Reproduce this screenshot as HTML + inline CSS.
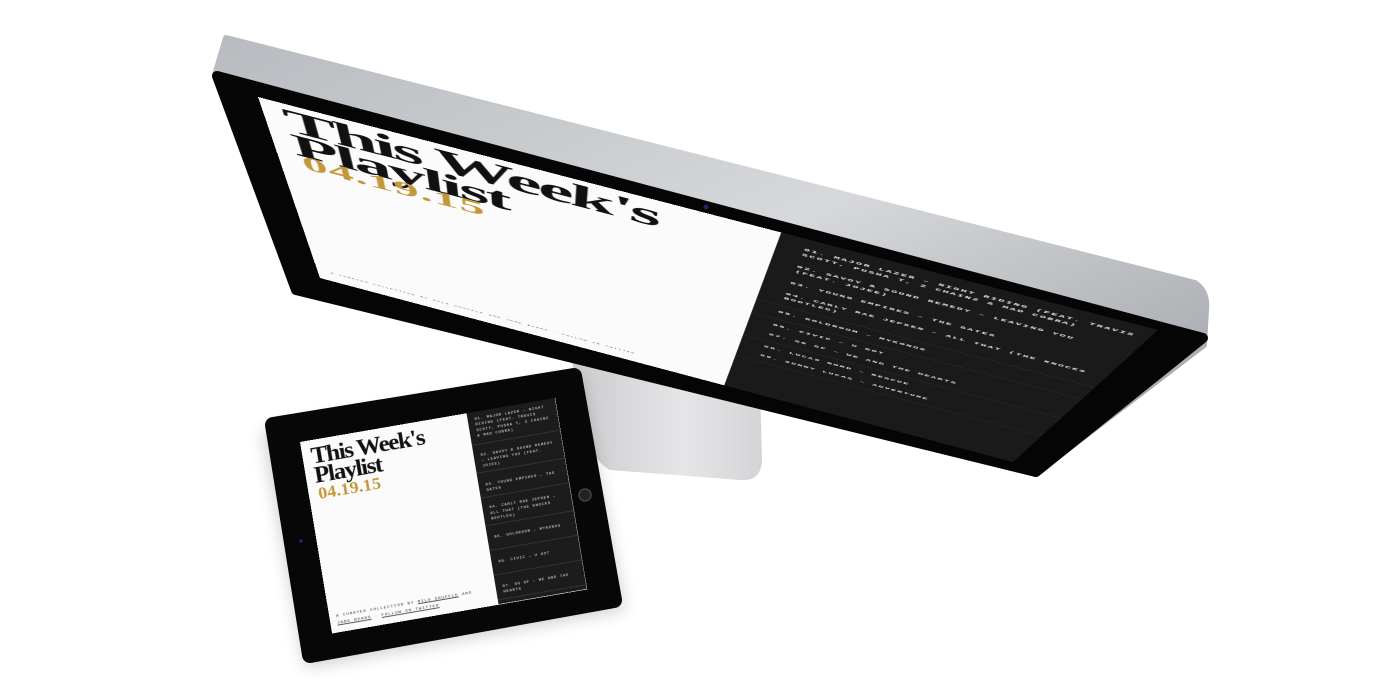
<!DOCTYPE html>
<html><head><meta charset="utf-8">
<style>
html,body{margin:0;padding:0;background:#fff;}
#root{position:relative;width:1400px;height:700px;overflow:hidden;background:#fff;}
svg.bg{position:absolute;left:0;top:0;}
.scr{position:absolute;left:0;top:0;transform-origin:0 0;overflow:hidden;}
#mon{width:1000px;height:600px;transform:matrix3d(0.8595,0.2215,0,-0.00003496,0.2587,0.4367,0,0.0004857,0,0,1,0,258,97,0,1);}
#tab{width:300px;height:240px;transform:matrix(0.85,-0.1467,0.1333,0.796,300,442);}
.white{position:absolute;left:0;top:0;bottom:0;background:#fbfbfb;}
.black{position:absolute;top:0;bottom:0;right:0;background:#1a1a1a;}
.serif{font-family:"Liberation Serif",serif;font-weight:bold;white-space:nowrap;position:absolute;}
.mono{font-family:"Liberation Mono",monospace;text-transform:uppercase;}
.item{border-bottom:1px solid #3a3a3a;color:#eee;}
</style></head><body><div id="root">
<svg class="bg" width="1400" height="700">
<defs>
<linearGradient id="sil" x1="0" y1="0" x2="1" y2="1"><stop offset="0" stop-color="#b8bbbf"/><stop offset="0.5" stop-color="#d6d8db"/><stop offset="1" stop-color="#9a9da2"/></linearGradient>
<linearGradient id="std" x1="0" y1="0" x2="1" y2="0"><stop offset="0" stop-color="#c9c9cc"/><stop offset="0.6" stop-color="#e6e6e8"/><stop offset="1" stop-color="#d4d4d6"/></linearGradient>
<filter id="blur"><feGaussianBlur stdDeviation="8"/></filter>
</defs>
<path d="M565 330 L760 385 L762 462 Q760 482 740 480 L610 470 Q590 460 585 420 Z" fill="url(#std)"/>
<path d="M262 430 L580 378 L625 610 L305 668 Z" fill="#000" opacity="0.18" filter="url(#blur)"/>
<path d="M226 38 L1195 283 Q1208 292 1206 310 L1204 345 L1035 474 L215 75 Z" fill="url(#sil)" stroke="url(#sil)" stroke-width="6" stroke-linejoin="round"/>
<path d="M217 76 L1203 338 L1036 472 L296 290 Z" fill="#050505" stroke="#050505" stroke-width="10" stroke-linejoin="round"/>
<circle cx="706" cy="207" r="2.5" fill="#1a2a66"/>
<path d="M273 425 L574 376 L614 600 L310 655 Z" fill="#070707" stroke="#070707" stroke-width="16" stroke-linejoin="round"/>
<circle cx="585" cy="495" r="6" fill="#222" stroke="#444" stroke-width="1.5"/>
<circle cx="301" cy="541" r="1.8" fill="#1a2a77"/>
</svg>

<div id="mon" class="scr">
 <div class="white" style="width:590px;">
  <div class="serif" style="left:24px;top:-8px;font-size:92px;letter-spacing:-4px;color:#111;">This Week's</div>
  <div class="serif" style="left:24px;top:60px;font-size:92px;letter-spacing:-4px;color:#111;">Playlist</div>
  <div class="serif" style="left:30px;top:128px;font-size:62px;letter-spacing:1px;color:#c4973a;">04.19.15</div>
  <div class="mono" style="position:absolute;left:20px;top:560px;font-size:7px;letter-spacing:2px;color:#444;white-space:nowrap;">A curated collection by Milo Shuffle and Jane Beans · Follow on Twitter</div>
 </div>
 <div class="black" style="left:590px;">
  <div class="mono" style="font-size:10.5px;letter-spacing:2px;font-weight:bold;line-height:16px;padding-top:20px;">
   <div class="item" style="padding:4px 10px 18px 30px;border-color:#1a1a1a;">01. Major Lazer – Night Riding (feat. Travis Scott, Pusha T, 2 Chainz &amp; Mad Cobra)</div>
   <div class="item" style="padding:4px 10px 18px 30px;border-color:#1a1a1a;">02. Savoy &amp; Sound Remedy – Leaving You (feat. Jojee)</div>
   <div class="item" style="padding:4px 10px 18px 30px;border-color:#1a1a1a;">03. Young Empires – The Gates</div>
   <div class="item" style="padding:4px 10px 18px 30px;">04. Carly Rae Jepsen – All That (The Knocks Bootleg)</div>
   <div class="item" style="padding:16px 10px 18px 30px;">05. Goldroom – Mykonos</div>
   <div class="item" style="padding:16px 10px 18px 30px;border-color:#1a1a1a;">06. Civic – U Got</div>
   <div class="item" style="padding:4px 10px 18px 30px;">07. SG GF – We and the Hearts</div>
   <div class="item" style="padding:16px 10px 18px 30px;border-color:#1a1a1a;">08. Lucas Nord – Rescue</div>
   <div class="item" style="padding:4px 10px 18px 30px;">09. Sunny Lucas – Adventure</div>
  </div>
 </div>
</div>

<div id="tab" class="scr">
 <div class="white" style="width:196px;">
  <div class="serif" style="left:10px;top:4px;font-size:29px;letter-spacing:-1.6px;color:#111;">This Week's</div>
  <div class="serif" style="left:10px;top:28px;font-size:29px;letter-spacing:-1.6px;color:#111;">Playlist</div>
  <div class="serif" style="left:11px;top:55px;font-size:21px;letter-spacing:0;color:#c4973a;">04.19.15</div>
  <div class="mono" style="position:absolute;left:8px;top:216px;width:180px;font-size:5px;letter-spacing:1px;line-height:9px;color:#333;">A curated collection by <u>Milo Shuffle</u> and <u>Jane Beans</u> · <u>Follow on Twitter</u></div>
 </div>
 <div class="black" style="left:196px;background:#1c1c1c;">
  <div class="mono" style="font-size:4.6px;letter-spacing:0.8px;line-height:7px;">
   <div class="item" style="padding:6px 6px 6px 8px;height:28px;">01. Major Lazer – Night Riding (feat. Travis Scott, Pusha T, 2 Chainz &amp; Mad Cobra)</div>
   <div class="item" style="padding:10px 6px 4px 8px;height:20px;">02. Savoy &amp; Sound Remedy – Leaving You (feat. Jojee)</div>
   <div class="item" style="padding:12px 6px 4px 8px;height:14px;">03. Young Empires – The Gates</div>
   <div class="item" style="padding:10px 6px 4px 8px;height:20px;">04. Carly Rae Jepsen – All That (The Knocks Bootleg)</div>
   <div class="item" style="padding:12px 6px 4px 8px;height:14px;">05. Goldroom – Mykonos</div>
   <div class="item" style="padding:12px 6px 4px 8px;height:14px;">06. Civic – U Got</div>
   <div class="item" style="padding:12px 6px 4px 8px;height:14px;">07. SG GF – We and the Hearts</div>
  </div>
 </div>
</div>
</div></body></html>
